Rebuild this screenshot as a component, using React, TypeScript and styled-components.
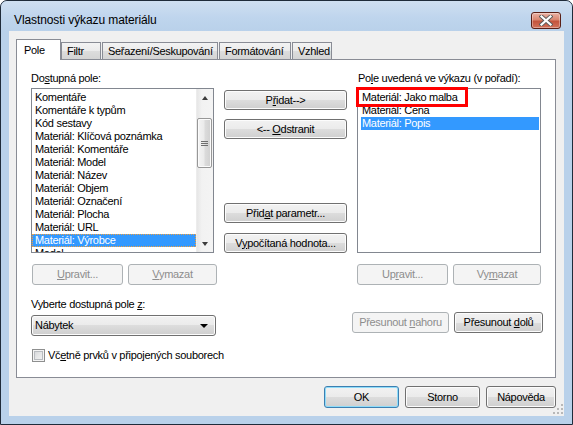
import React from "react";
import styled, { createGlobalStyle, css } from "styled-components";

const GlobalStyle = createGlobalStyle`
    html, body {
        margin: 0;
        padding: 0;
        background: #fff;
    }
    body {
        font-family: "Liberation Sans", Arial, sans-serif;
        font-size: 11px;
        letter-spacing: -0.3px;
        color: #000;
    }
`

const Window = styled.div`
    width: 573px;
    height: 425px;
    box-sizing: border-box;
    border: 1px solid #1f2b3a;
    border-radius: 7px 7px 0 0;
    background: #b9d1ea;
    display: flex;
    flex-direction: column;
    padding: 0 8px 8px 8px;
    overflow: hidden;
`

const TitleBar = styled.div`
    height: 30px;
    margin: 0 -8px;
    padding: 9px 11px 0 13px;
    box-sizing: border-box;
    display: flex;
    align-items: center;
    justify-content: space-between;
    background: linear-gradient(to bottom, #cfdff1 0%, #bfd5ed 55%, #b9d1ea 100%);
    border-radius: 6px 6px 0 0;
`

const Title = styled.div`
    font-size: 12px;
    line-height: 15px;
    letter-spacing: -0.1px;
    color: #000;
`

const CloseButton = styled.div`
    width: 30px;
    height: 17px;
    box-sizing: border-box;
    border: 1px solid #5a1f16;
    border-radius: 3px;
    background: linear-gradient(to bottom, #eab3a6 0%, #d98670 45%, #c4543d 55%, #d2725b 100%);
    box-shadow: inset 0 0 0 1px rgba(255, 255, 255, 0.35);
    display: flex;
    align-items: center;
    justify-content: center;
`

const Client = styled.div`
    flex: 1;
    position: relative;
    background: #f0f0f0;
    display: flex;
    flex-direction: column;
    padding: 8px 8px 8px 7px;
`

const TabStrip = styled.div`
    display: flex;
    align-items: flex-end;
    height: 21px;
    margin-bottom: -1px;
    position: relative;
    z-index: 1;
`

const Tab = styled.div<{ $active?: boolean; $w: number }>`
    width: ${p => p.$w}px;
    box-sizing: border-box;
    border: 1px solid #898c95;
    line-height: 13px;
    white-space: nowrap;
    ${p => p.$active ? css`
        height: 21px;
        border-bottom: none;
        background: #fff;
        padding: 4px 0 0 7px;
    ` : css`
        height: 17px;
        margin-bottom: 1px;
        margin-left: 1px;
        border-bottom: none;
        background: linear-gradient(to bottom, #f3f3f3 0%, #ebebeb 50%, #dddddd 50%, #d4d4d4 100%);
        padding: 2px 0 0 5px;
    `}
    &:nth-child(2) {
        margin-left: 0;
    }
`

const Panel = styled.div`
    flex: 1;
    background: #fff;
    border: 1px solid #898c95;
    display: flex;
    flex-direction: column;
    padding: 12px 0 0 14px;
`

const Row = styled.div<{ $mt?: number }>`
    display: flex;
    align-items: flex-start;
    margin-top: ${p => p.$mt ?? 0}px;
`

const Col = styled.div<{ $w: number; $ml?: number }>`
    width: ${p => p.$w}px;
    margin-left: ${p => p.$ml ?? 0}px;
    display: flex;
    flex-direction: column;
`

const MidCol = styled.div`
    width: 123px;
    height: 181px;
    margin-left: 7px;
    padding-top: 18px;
    box-sizing: border-box;
    display: flex;
    flex-direction: column;
    justify-content: space-between;
`

const ButtonGroup = styled.div<{ $gap: number }>`
    display: flex;
    flex-direction: column;
    gap: ${p => p.$gap}px;
`

const FieldLabel = styled.div<{ $indent?: number }>`
    height: 13px;
    line-height: 13px;
    margin-bottom: 3px;
    padding-left: ${p => p.$indent ?? 0}px;
    white-space: nowrap;
`

const Key = styled.span`
    text-decoration: underline;
`

const ListWrap = styled.div<{ $ml?: number }>`
    position: relative;
    margin-left: ${p => p.$ml ?? 0}px;
`

const ListBox = styled.div<{ $w: number; $inset: number }>`
    width: ${p => p.$w}px;
    height: 165px;
    box-sizing: border-box;
    border: 1px solid #828790;
    background: #fff;
    display: flex;
    overflow: hidden;
    padding-left: ${p => p.$inset}px;
`

const Items = styled.div<{ $pr?: number }>`
    flex: 1;
    padding-top: 2px;
    padding-right: ${p => p.$pr ?? 0}px;
    min-width: 0;
`

const Item = styled.div<{ $selected?: boolean; $focus?: boolean; $pad: number }>`
    height: 13px;
    line-height: 13px;
    padding-left: ${p => p.$pad}px;
    white-space: nowrap;
    box-sizing: border-box;
    ${p => p.$selected && css`
        background: #3399ff;
        color: #fff;
    `}
    ${p => p.$focus && css`
        outline: 1px dotted #f0a040;
        outline-offset: -1px;
    `}
`

const ScrollBar = styled.div`
    width: 17px;
    flex-shrink: 0;
    display: flex;
    flex-direction: column;
    background: linear-gradient(to right, #e6e6e6 0%, #f2f2f2 30%, #f4f4f4 100%);
    border-left: 1px solid #ececec;
    box-sizing: border-box;
`

const ArrowBox = styled.div`
    height: 17px;
    display: flex;
    align-items: center;
    justify-content: center;
`

const Arrow = styled.span<{ $down?: boolean }>`
    width: 0;
    height: 0;
    border-left: 3.5px solid transparent;
    border-right: 3.5px solid transparent;
    ${p => p.$down
        ? css`border-top: 4px solid #3c3c3c;`
        : css`border-bottom: 4px solid #3c3c3c;`}
`

const Thumb = styled.div`
    margin: 12px 1px 0 0;
    height: 50px;
    box-sizing: border-box;
    border: 1px solid #979797;
    border-radius: 2px;
    background: linear-gradient(to right, #f4f4f4 0%, #ebebeb 45%, #dbdbdb 55%, #d0d0d0 100%);
    box-shadow: inset 0 0 0 1px #fbfbfb;
    display: flex;
    align-items: center;
    justify-content: center;
`

const Track = styled.div`
    flex: 1;
`

const Annotation = styled.div`
    position: absolute;
    left: -1px;
    top: -1px;
    width: 112px;
    height: 20px;
    box-sizing: border-box;
    border: 3px solid #ff0000;
    pointer-events: none;
`

const ButtonRow = styled.div<{ $ml?: number; $mt?: number; $gap?: number }>`
    display: flex;
    gap: ${p => p.$gap ?? 5}px;
    margin-left: ${p => p.$ml ?? 0}px;
    margin-top: ${p => p.$mt ?? 0}px;
`

const Button = styled.button<{ $w: number; $h?: number; $default?: boolean }>`
    width: ${p => p.$w}px;
    height: ${p => p.$h ?? 21}px;
    padding: 0;
    box-sizing: border-box;
    font-family: inherit;
    font-size: 11px;
    letter-spacing: inherit;
    line-height: 13px;
    color: #000;
    border: 1px solid #707070;
    border-radius: 3px;
    background: linear-gradient(to bottom, #f2f2f2 0%, #ebebeb 50%, #dddddd 50%, #cfcfcf 100%);
    box-shadow: inset 0 0 0 1px #fcfcfc;
    display: flex;
    align-items: center;
    justify-content: center;
    white-space: nowrap;
    ${p => p.$default && css`
        border-color: #3c7fb1;
        box-shadow: inset 0 0 0 1px #8fdcf9;
    `}
    &:disabled {
        color: #8d8d8d;
        border-color: #adb2b5;
        background: #f4f4f4;
        box-shadow: none;
    }
`

const Combo = styled.div`
    width: 185px;
    height: 21px;
    margin-top: 1px;
    box-sizing: border-box;
    border: 1px solid #707070;
    border-radius: 3px;
    background: linear-gradient(to bottom, #f2f2f2 0%, #ebebeb 50%, #dddddd 50%, #cfcfcf 100%);
    box-shadow: inset 0 0 0 1px #fcfcfc;
    display: flex;
    align-items: center;
    justify-content: space-between;
    padding: 0 7px 0 3px;
    line-height: 13px;
`

const ComboArrow = styled.span`
    width: 0;
    height: 0;
    border-left: 4px solid transparent;
    border-right: 4px solid transparent;
    border-top: 4px solid #000;
`

const CheckRow = styled.label`
    display: flex;
    align-items: center;
    gap: 3px;
    margin-top: 13px;
    padding-left: 1px;
    line-height: 13px;
`

const CheckBox = styled.span`
    width: 13px;
    height: 13px;
    box-sizing: border-box;
    border: 1px solid #8e8f8f;
    background: linear-gradient(135deg, #cfd1d4 0%, #e6e7e8 50%, #f5f5f5 100%);
    box-shadow: inset 0 0 0 1px #f4f4f4, inset 0 0 0 2px #b9bcc0;
`

const Footer = styled.div`
    display: flex;
    justify-content: flex-end;
    gap: 6px;
    margin-top: 8px;
`

const Grip = styled.svg`
    position: absolute;
    right: 1px;
    bottom: 2px;
`

const leftItems = [
    'Komentáře',
    'Komentáře k typům',
    'Kód sestavy',
    'Materiál: Klíčová poznámka',
    'Materiál: Komentáře',
    'Materiál: Model',
    'Materiál: Název',
    'Materiál: Objem',
    'Materiál: Označení',
    'Materiál: Plocha',
    'Materiál: URL',
    'Materiál: Výrobce',
    'Model',
]

const rightItems = ['Materiál: Jako malba', 'Materiál: Cena', 'Materiál: Popis']

const tabs = [
    { label: 'Pole', w: 45, active: true },
    { label: 'Filtr', w: 40 },
    { label: 'Seřazení/Seskupování', w: 116 },
    { label: 'Formátování', w: 72 },
    { label: 'Vzhled', w: 40 },
]

export default function App() {
    return (
        <>
            <GlobalStyle />
            <Window>
                <TitleBar>
                    <Title>Vlastnosti výkazu materiálu</Title>
                    <CloseButton>
                        <svg width="14" height="11" viewBox="0 0 14 11">
                            <path d="M2.5 1.5 L11.5 9.5 M11.5 1.5 L2.5 9.5" stroke="#5b5b5b" strokeWidth="4" strokeLinecap="square" />
                            <path d="M2.5 1.5 L11.5 9.5 M11.5 1.5 L2.5 9.5" stroke="#fff" strokeWidth="2.2" strokeLinecap="square" />
                        </svg>
                    </CloseButton>
                </TitleBar>
                <Client>
                    <TabStrip>
                        {tabs.map(t => (
                            <Tab key={t.label} $active={t.active} $w={t.w}>{t.label}</Tab>
                        ))}
                    </TabStrip>
                    <Panel>
                        <Row>
                            <Col $w={186}>
                                <FieldLabel>Do<Key>s</Key>tupná pole:</FieldLabel>
                                <ListBox $w={183} $inset={0}>
                                    <Items>
                                        {leftItems.map((it, i) => (
                                            <Item key={i} $pad={3} $selected={i === 11} $focus={i === 11}>{it}</Item>
                                        ))}
                                    </Items>
                                    <ScrollBar>
                                        <ArrowBox><Arrow /></ArrowBox>
                                        <Thumb>
                                            <svg width="7" height="7" viewBox="0 0 7 7">
                                                <path d="M0 1.5 H7 M0 3.5 H7 M0 5.5 H7" stroke="#6f6f6f" strokeWidth="1" />
                                            </svg>
                                        </Thumb>
                                        <Track />
                                        <ArrowBox><Arrow $down /></ArrowBox>
                                    </ScrollBar>
                                </ListBox>
                                <ButtonRow $ml={1} $mt={11}>
                                    <Button $w={91} disabled><span><Key>U</Key>pravit...</span></Button>
                                    <Button $w={89} disabled><span><Key>V</Key>ymazat</span></Button>
                                </ButtonRow>
                            </Col>
                            <MidCol>
                                <ButtonGroup $gap={9}>
                                    <Button $w={123} $h={20}><span>P<Key>ř</Key>idat--&gt;</span></Button>
                                    <Button $w={123} $h={20}><span>&lt;-- <Key>O</Key>dstranit</span></Button>
                                </ButtonGroup>
                                <ButtonGroup $gap={10}>
                                    <Button $w={123} $h={20}><span>Přid<Key>a</Key>t parametr...</span></Button>
                                    <Button $w={123} $h={20}><span>V<Key>y</Key>počítaná hodnota...</span></Button>
                                </ButtonGroup>
                            </MidCol>
                            <Col $w={191} $ml={5}>
                                <FieldLabel $indent={6}>Po<Key>l</Key>e uvedená ve výkazu (v pořadí):</FieldLabel>
                                <ListWrap $ml={5}>
                                    <ListBox $w={184} $inset={3}>
                                        <Items $pr={1}>
                                            {rightItems.map((it, i) => (
                                                <Item key={i} $pad={1} $selected={i === 2}>{it}</Item>
                                            ))}
                                        </Items>
                                    </ListBox>
                                    <Annotation />
                                </ListWrap>
                                <ButtonRow $ml={5} $mt={11}>
                                    <Button $w={91} disabled><span>Up<Key>r</Key>avit...</span></Button>
                                    <Button $w={88} disabled><span>Vy<Key>m</Key>azat</span></Button>
                                </ButtonRow>
                            </Col>
                        </Row>
                        <Row $mt={13}>
                            <Col $w={186}>
                                <FieldLabel>Vyberte dostupná pole <Key>z</Key>:</FieldLabel>
                                <Combo>
                                    <span>Nábytek</span>
                                    <ComboArrow />
                                </Combo>
                            </Col>
                            <Col $w={191} $ml={135}>
                                <ButtonRow $mt={14}>
                                    <Button $w={97} disabled><span>Přesunout <Key>n</Key>ahoru</span></Button>
                                    <Button $w={89}><span>Přesunout <Key>d</Key>olů</span></Button>
                                </ButtonRow>
                            </Col>
                        </Row>
                        <CheckRow>
                            <CheckBox />
                            <span>Vč<Key>e</Key>tně prvků v připojených souborech</span>
                        </CheckRow>
                    </Panel>
                    <Footer>
                        <Button $w={75} $h={22} $default>OK</Button>
                        <Button $w={75} $h={22}>Storno</Button>
                        <Button $w={70} $h={22}>Nápověda</Button>
                    </Footer>
                    <Grip width="10" height="10" viewBox="0 0 10 10">
                        <g fill="#b8b8b8">
                            <rect x="8" y="0" width="2" height="2" />
                            <rect x="4" y="4" width="2" height="2" />
                            <rect x="8" y="4" width="2" height="2" />
                            <rect x="0" y="8" width="2" height="2" />
                            <rect x="4" y="8" width="2" height="2" />
                            <rect x="8" y="8" width="2" height="2" />
                        </g>
                    </Grip>
                </Client>
            </Window>
        </>
    )
}
